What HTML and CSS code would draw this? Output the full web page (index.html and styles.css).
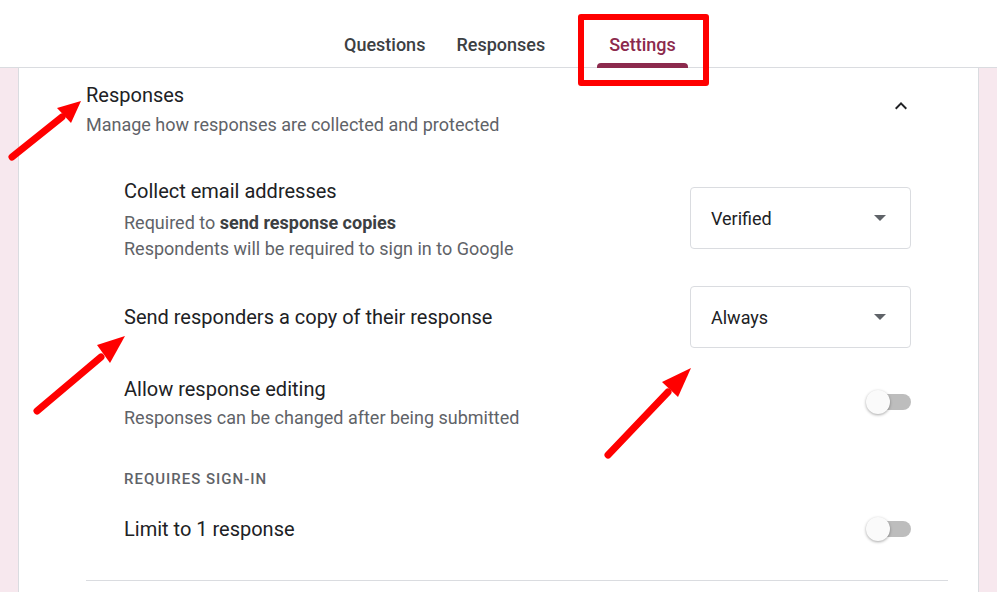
FILE: index.html
```html
<!DOCTYPE html>
<html lang="en">
<head>
    <meta charset="UTF-8">
    <meta name="viewport" content="width=device-width, initial-scale=1.0">
    <title>Settings</title>
    <link rel="stylesheet" href="styles.css">
</head>
<body>
    <nav class="tabs">
        <div class="tab">Questions</div>
        <div class="tab">Responses</div>
        <div class="tab active">Settings</div>
    </nav>

    <main class="page">
        <section class="card">
            <div class="section-header">
                <div>
                    <div class="section-title">Responses</div>
                    <div class="section-sub">Manage how responses are collected and protected</div>
                </div>
                <svg class="chevron" width="24" height="24" viewBox="0 0 24 24"><path d="M7.41 15.41 12 10.83l4.59 4.58L18 14l-6-6-6 6z" fill="#202124"/></svg>
            </div>

            <div class="setting row-email">
                <div>
                    <div class="setting-title">Collect email addresses</div>
                    <div class="setting-sub">Required to <strong>send response copies</strong><br>Respondents will be required to sign in to Google</div>
                </div>
                <div class="dropdown">Verified<span class="caret"></span></div>
            </div>

            <div class="setting row-copy">
                <div class="setting-title">Send responders a copy of their response</div>
                <div class="dropdown">Always<span class="caret"></span></div>
            </div>

            <div class="setting row-edit">
                <div>
                    <div class="setting-title">Allow response editing</div>
                    <div class="setting-sub">Responses can be changed after being submitted</div>
                </div>
                <div class="toggle"><span class="track"></span><span class="thumb"></span></div>
            </div>

            <div class="group-label">Requires sign-in</div>

            <div class="setting row-limit">
                <div class="setting-title">Limit to 1 response</div>
                <div class="toggle"><span class="track"></span><span class="thumb"></span></div>
            </div>

            <div class="divider"></div>
        </section>
    </main>

    <!-- annotation layer -->
    <div class="highlight"></div>
    <svg class="arrows" width="997" height="592" viewBox="0 0 997 592">
        <g stroke="#ff0000" stroke-width="7" stroke-linecap="round" fill="#ff0000">
            <line x1="12" y1="157" x2="62" y2="117"/>
            <line x1="37" y1="411" x2="101" y2="357"/>
            <line x1="608" y1="455" x2="668" y2="392"/>
        </g>
        <g fill="#ff0000">
            <polygon points="81,101 57,108 71,123"/>
            <polygon points="125,336 97,345 110,363"/>
            <polygon points="691,368 662,382 678,397"/>
        </g>
    </svg>
</body>
</html>
```

FILE: styles.css
```css
body {
    margin: 0;
    font-family: Roboto, "Noto Sans", Arial, sans-serif;
    color: #202124;
    background-color: #fff;
    width: 997px;
    height: 592px;
    overflow: hidden;
    position: relative;
}
.tabs {
    height: 68px;
    border-bottom: 1px solid #dadce0;
    display: flex;
    align-items: stretch;
    padding-left: 332px;
    gap: 7px;
    box-sizing: border-box;
}
.tab {
    position: relative;
    padding: 22px 12px 0;
    font-size: 18px;
    font-weight: 500;
    color: #3c4043;
    display: flex;
    align-items: center;
}
.tab.active {
    color: #8c2a4d;
    margin-left: 33px;
}
.tab.active::after {
    content: "";
    position: absolute;
    left: 0;
    right: 0;
    bottom: -1px;
    height: 5px;
    background-color: #8c2a4d;
    border-radius: 4px 4px 0 0;
}
.page {
    background-color: #f7e8ee;
    padding: 0 18px;
    height: 524px;
}
.card {
    background: #fff;
    border-left: 1px solid #dadce0;
    border-right: 1px solid #dadce0;
    height: 100%;
    padding: 15px 30px 0 67px;
    box-sizing: border-box;
}
.section-header {
    display: flex;
    justify-content: space-between;
    align-items: flex-start;
    padding-right: 35px;
}
.chevron {
    margin-top: 11px;
}
.section-title {
    font-size: 20px;
    line-height: 24px;
}
.section-sub {
    font-size: 18px;
    line-height: 24px;
    margin-top: 6px;
    color: #5f6368;
}
.setting {
    display: flex;
    justify-content: space-between;
    padding: 0 37px 0 38px;
}
.setting-title {
    font-size: 20px;
    line-height: 24px;
}
.setting-sub {
    font-size: 18px;
    line-height: 26px;
    color: #5f6368;
    margin-top: 7px;
}
.setting-sub strong {
    font-weight: 700;
    color: #3c4043;
}
.row-email {
    margin-top: 42px;
    align-items: flex-start;
}
.row-email .dropdown {
    margin-top: 8px;
}
.row-copy {
    margin-top: 24px;
    align-items: center;
}
.row-edit {
    margin-top: 29px;
    align-items: center;
}
.row-edit .setting-sub {
    margin-top: 4px;
}
.row-edit .toggle {
    margin-bottom: 5px;
}
.row-limit {
    margin-top: 16px;
    height: 48px;
    align-items: center;
}
.dropdown {
    width: 221px;
    height: 62px;
    box-sizing: border-box;
    border: 1px solid #dadce0;
    border-radius: 4px;
    display: flex;
    align-items: center;
    justify-content: space-between;
    padding: 0 24px 0 20px;
    font-size: 18px;
}
.caret {
    width: 0;
    height: 0;
    border-left: 6px solid transparent;
    border-right: 6px solid transparent;
    border-top: 6px solid #5f6368;
}
.toggle {
    position: relative;
    width: 46px;
    height: 24px;
}
.track {
    position: absolute;
    left: 5px;
    right: 0;
    top: 4px;
    height: 16px;
    border-radius: 8px;
    background-color: #bdbdbd;
}
.thumb {
    position: absolute;
    left: 1px;
    top: 0;
    width: 24px;
    height: 24px;
    border-radius: 50%;
    background-color: #fafafa;
    box-shadow: 0 1px 3px rgba(0,0,0,0.35);
}
.group-label {
    margin-top: 38px;
    padding-left: 38px;
    font-size: 15px;
    line-height: 20px;
    font-weight: 500;
    letter-spacing: 1px;
    text-transform: uppercase;
    color: #5f6368;
}
.divider {
    margin-top: 27px;
    height: 1px;
    background-color: #dadce0;
}
.highlight {
    position: absolute;
    left: 578px;
    top: 14px;
    width: 131px;
    height: 72px;
    box-sizing: border-box;
    border: 6px solid #ff0000;
    border-radius: 3px;
}
.arrows {
    position: absolute;
    left: 0;
    top: 0;
    pointer-events: none;
}
```
